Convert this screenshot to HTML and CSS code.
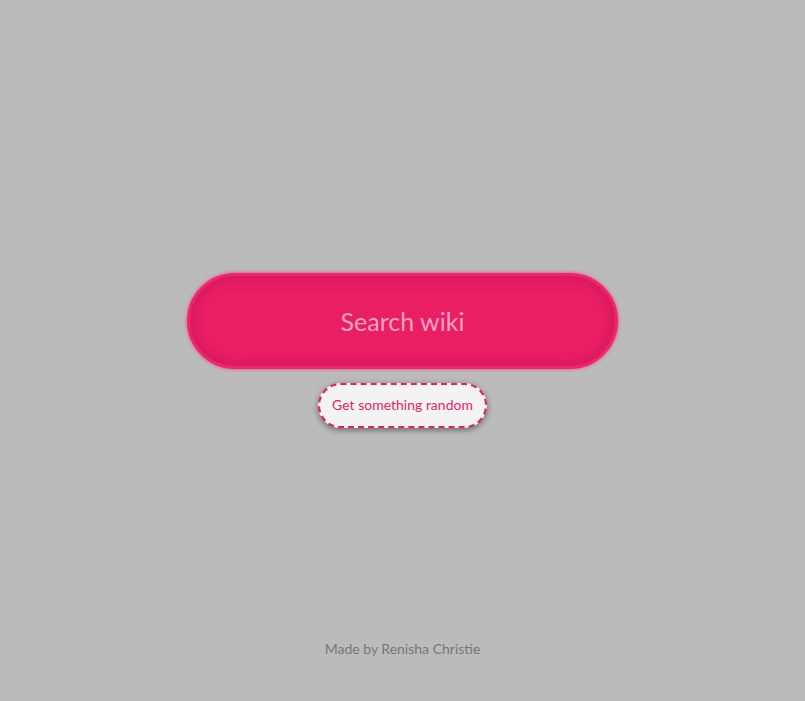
FILE: index.html
```html
<!DOCTYPE html>
<html>
<head>
<meta charset="utf-8">
<link rel="stylesheet" href="styles.css">
</head>
<body>
<div class="top"></div>
<main class="group">
  <button class="search">Search wiki</button>
  <button class="random">Get something random</button>
</main>
<footer class="bottom"><p class="credit">Made by Renisha Christie</p></footer>
</body>
</html>
```
FILE: styles.css
```css
html, body {
  margin: 0;
  height: 100%;
}
body {
  background: #bbbbbb;
  font-family: Lato, "Noto Sans", sans-serif;
  display: grid;
  grid-template-rows: 1fr auto 1fr;
  min-height: 701px;
}
.group {
  display: flex;
  flex-direction: column;
  align-items: center;
  gap: 14px;
}
.search {
  width: 431px;
  height: 96px;
  border-radius: 48px;
  border: 3px solid #f0256a;
  background: #e91e63;
  color: #f7a3c2;
  font-family: inherit;
  font-size: 25px;
  box-shadow: 0 0 3px 1px rgba(240, 60, 120, 0.6), inset 0 0 8px 4px rgba(180, 20, 80, 0.35);
  cursor: pointer;
  padding: 0;
}
.random {
  width: 169px;
  height: 45px;
  border-radius: 23px;
  border: 2px dashed #e91e63;
  background: #f4f3f4;
  color: #e91e63;
  font-family: inherit;
  font-size: 14px;
  box-shadow: 0 2px 6px rgba(0, 0, 0, 0.45);
  padding: 0 0 2px;
  cursor: pointer;
}
.bottom {
  display: flex;
  justify-content: center;
  align-items: flex-end;
}
.credit {
  margin: 0 0 44px;
  color: #777777;
  font-size: 14px;
}
```
